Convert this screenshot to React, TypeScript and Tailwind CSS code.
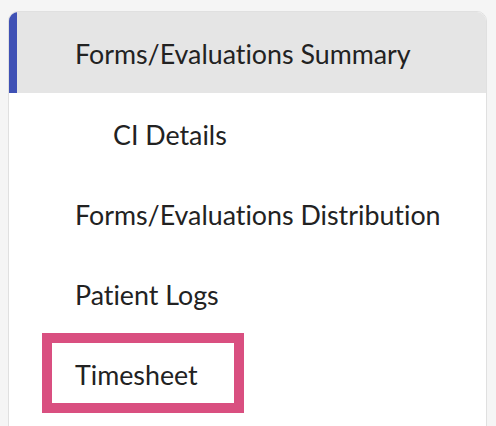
const items = [
  { label: 'CI Details', indent: true },
  { label: 'Forms/Evaluations Distribution' },
  { label: 'Patient Logs' },
]

export default function App() {
  return (
    <div className="min-h-screen bg-[#f5f5f5] pl-[8px] pr-[9px] pt-[11px] text-[#222222] font-['Lato',sans-serif] text-[26.8px] [font-variant-ligatures:none]">
      <div className="overflow-hidden rounded-t-[10px] border border-[#e0e0e0] bg-white pb-[40px]">
        <div className="flex h-[81px] items-center border-l-8 border-[#3f51b5] bg-[#e5e5e5] pl-[58px] pt-[4px]">
          Forms/Evaluations Summary
        </div>
        {items.map(item => (
          <div
            key={item.label}
            className={`flex h-[80px] items-center pt-[4px] ${item.indent ? 'pl-[104px]' : 'pl-[66px]'}`}
          >
            {item.label}
          </div>
        ))}
        <div className="pl-[33px]">
          <div className="flex h-[80px] w-[202px] items-center border-[10px] border-[#d94f80] pl-[23px] pt-[4px]">
            Timesheet
          </div>
        </div>
      </div>
    </div>
  )
}
